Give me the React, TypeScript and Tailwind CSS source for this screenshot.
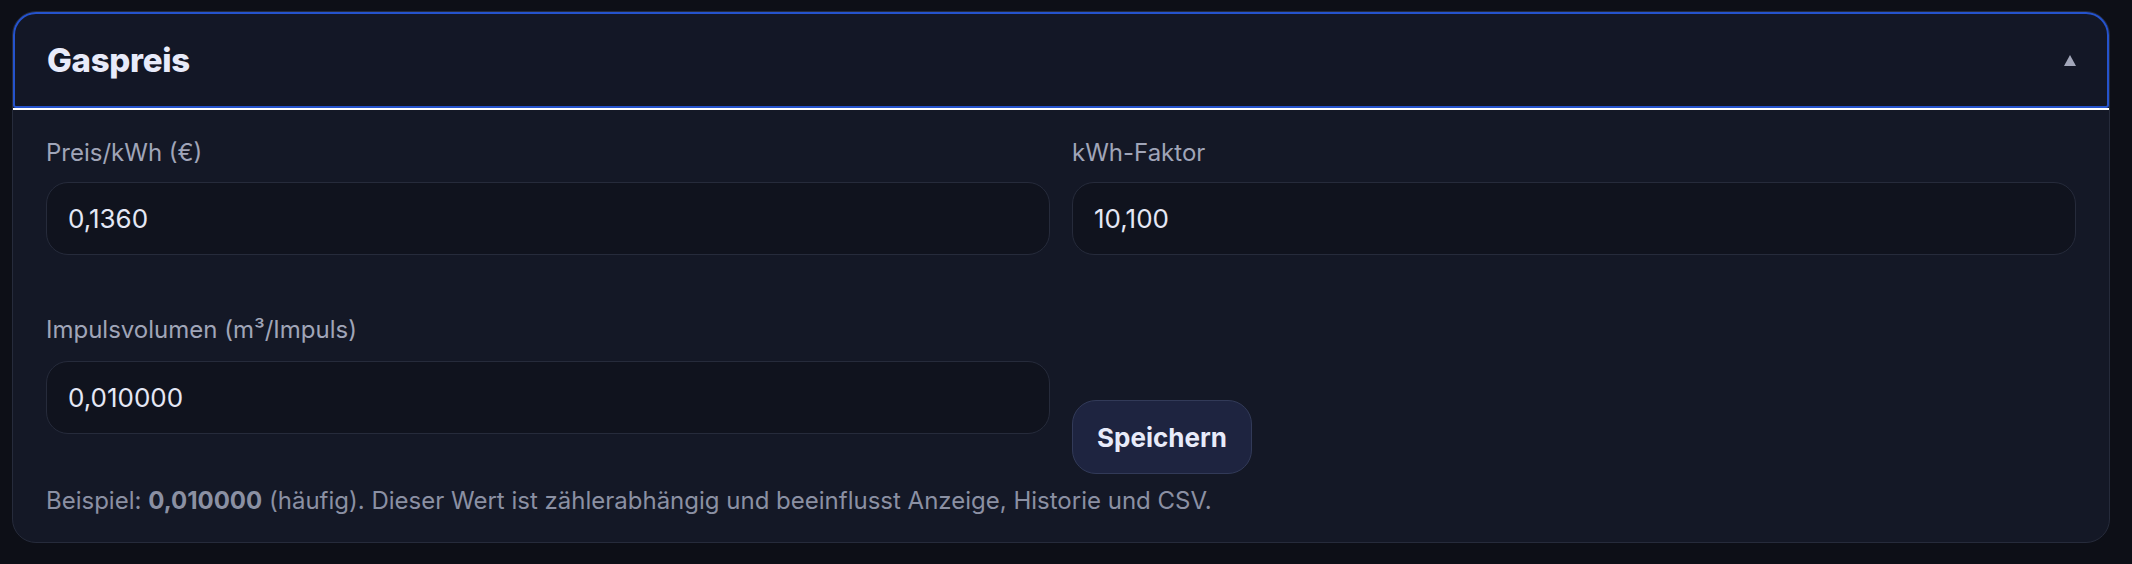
import React from "react";

export default function App() {
  const font = { fontFamily: "Inter, 'Noto Sans', sans-serif" };
  return (
    <div className="w-[2132px] h-[564px] bg-[#0d0f17] pt-[11px] pl-[12px]" style={font}>
      <div className="w-[2098px] rounded-[24px] border border-[#262b3b] bg-[#141826]">
        <div className="border-b-2 border-white">
          <div className="h-[96px] border-2 border-[#2553cc] rounded-t-[23px] rounded-b-[3px] bg-[#131726] flex items-center justify-between pl-[32px] pr-[31px]">
            <h2 className="text-[33px] font-extrabold text-[#e8ebfa] leading-none tracking-[-0.3px]">Gaspreis</h2>
            <svg width="12" height="11" viewBox="0 0 12 11">
              <path d="M6 0 L12 11 L0 11 Z" fill="#a3a7ba" />
            </svg>
          </div>
        </div>
        <div className="pt-[28px] px-[33px] pb-[26px]">
          <div className="grid grid-cols-2 gap-x-[22px] gap-y-[60px]">
            <div className="flex flex-col">
              <label className="text-[24px] leading-[30px] text-[#a0a5b8] mb-[14px]">Preis/kWh (€)</label>
              <div className="h-[73px] rounded-[22px] border border-[#262b3b] bg-[#10131e] flex items-center px-[21px] text-[26px] text-[#e4e7f5]">
                0,1360
              </div>
            </div>
            <div className="flex flex-col">
              <label className="text-[24px] leading-[30px] text-[#a0a5b8] mb-[14px]">kWh-Faktor</label>
              <div className="h-[73px] rounded-[22px] border border-[#262b3b] bg-[#10131e] flex items-center px-[21px] text-[26px] text-[#e4e7f5]">
                10,100
              </div>
            </div>
            <div className="flex flex-col">
              <label className="text-[24px] leading-[30px] text-[#a0a5b8] mb-[16px]">Impulsvolumen (m³/Impuls)</label>
              <div className="h-[73px] rounded-[22px] border border-[#262b3b] bg-[#10131e] flex items-center px-[21px] text-[26px] text-[#e4e7f5]">
                0,010000
              </div>
            </div>
            <div className="flex items-start">
              <button className="mt-[85px] h-[74px] w-[180px] rounded-[24px] border border-[#323a58] bg-[#1e2440] text-[26px] font-bold text-[#e8ebfa]">
                Speichern
              </button>
            </div>
          </div>
          <p className="mt-[12px] text-[24px] leading-[30px] text-[#8b90a3]">
            Beispiel: <b className="font-bold">0,010000</b> (häufig). Dieser Wert ist zählerabhängig und beeinflusst Anzeige, Historie und CSV.
          </p>
        </div>
      </div>
    </div>
  );
}
